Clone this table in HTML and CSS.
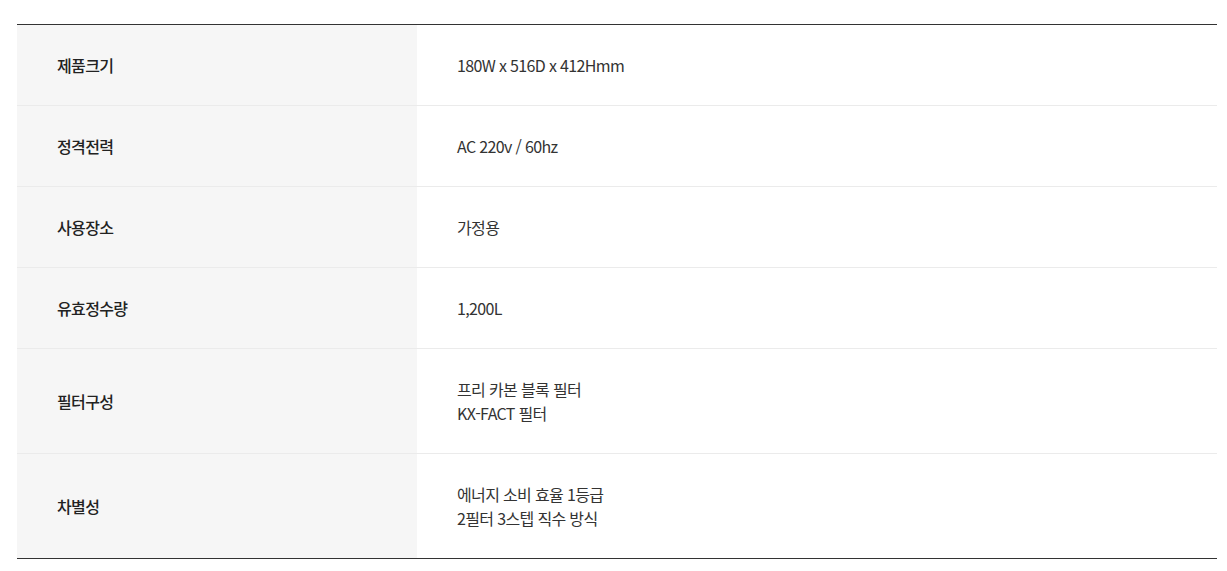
FILE: index.html
```html
<!DOCTYPE html>
<html lang="ko">
<head>
<meta charset="utf-8">
<link rel="stylesheet" href="styles.css">
</head>
<body>
<table class="spec">
  <tbody>
    <tr><th>제품크기</th><td>180W x 516D x 412Hmm</td></tr>
    <tr><th>정격전력</th><td>AC 220v / 60hz</td></tr>
    <tr><th>사용장소</th><td>가정용</td></tr>
    <tr><th>유효정수량</th><td>1,200L</td></tr>
    <tr><th>필터구성</th><td>프리 카본 블록 필터<br>KX-FACT 필터</td></tr>
    <tr><th>차별성</th><td>에너지 소비 효율 1등급<br>2필터 3스텝 직수 방식</td></tr>
  </tbody>
</table>
</body>
</html>
```

FILE: styles.css
```css
html, body {
  margin: 0;
  padding: 0;
  background: #fff;
}
body {
  padding: 24px 10px 0 17px;
  font-family: "Noto Sans CJK KR", "Noto Sans", sans-serif;
  color: #333;
}
.spec {
  width: 1200px;
  border-collapse: collapse;
  border-top: 1px solid #333;
  border-bottom: 1px solid #333;
}
.spec th, .spec td {
  padding: 28px 40px;
  font-size: 16px;
  line-height: 24px;
  letter-spacing: -0.65px;
  text-align: left;
  vertical-align: middle;
  border-top: 1px solid #ebebeb;
}
.spec tr:first-child th, .spec tr:first-child td {
  border-top: none;
}
.spec th {
  width: 320px;
  background: #f6f6f6;
  font-weight: 500;
  color: #222;
}
.spec td {
  font-weight: 400;
  color: #333;
}
```
